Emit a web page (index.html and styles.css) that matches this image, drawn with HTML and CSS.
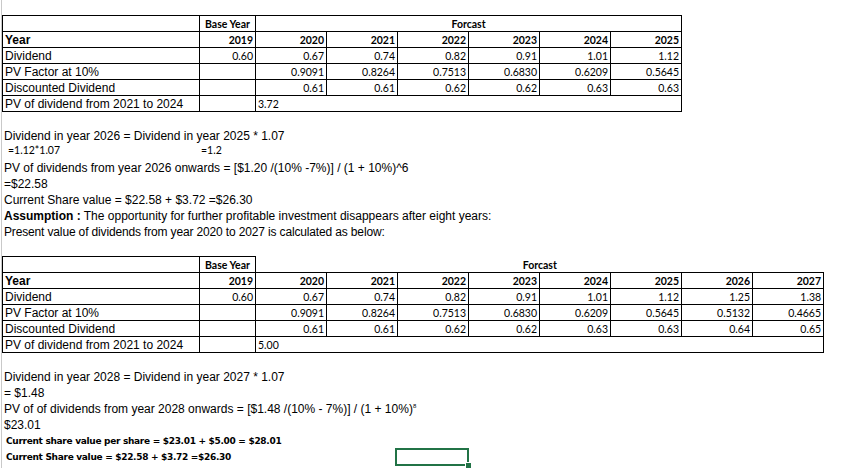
FILE: index.html
```html
<!DOCTYPE html>
<html>
<head>
<meta charset="utf-8">
<title>Dividend valuation</title>
<link rel="stylesheet" href="styles.css">
</head>
<body>
<div class="sheet">
  <div class="row row-first"></div>
  <table class="grid t1">
    <colgroup><col class="c-label"><col class="c-base"><col class="c-yr" span="6"></colgroup>
    <tr><td></td><td class="hdr center">Base Year</td><td class="hdr center" colspan="6">Forcast</td></tr>
    <tr><td class="lbl strong">Year</td><td class="num hdr">2019</td><td class="num hdr">2020</td><td class="num hdr">2021</td><td class="num hdr">2022</td><td class="num hdr">2023</td><td class="num hdr">2024</td><td class="num hdr">2025</td></tr>
    <tr><td class="lbl">Dividend</td><td class="num">0.60</td><td class="num">0.67</td><td class="num">0.74</td><td class="num">0.82</td><td class="num">0.91</td><td class="num">1.01</td><td class="num">1.12</td></tr>
    <tr><td class="lbl">PV Factor at 10%</td><td></td><td class="num">0.9091</td><td class="num">0.8264</td><td class="num">0.7513</td><td class="num">0.6830</td><td class="num">0.6209</td><td class="num">0.5645</td></tr>
    <tr><td class="lbl">Discounted Dividend</td><td></td><td class="num">0.61</td><td class="num">0.61</td><td class="num">0.62</td><td class="num">0.62</td><td class="num">0.63</td><td class="num">0.63</td></tr>
    <tr><td class="lbl">PV of dividend from 2021 to 2024</td><td></td><td class="val" colspan="6">3.72</td></tr>
  </table>
  <div class="row"></div>
  <div class="row line">Dividend in year 2026 = Dividend in year 2025 * 1.07</div>
  <div class="row split"><span class="cell-a small">=1.12*1.07</span><span class="cell-b small">=1.2</span></div>
  <div class="row line">PV of dividends from year 2026 onwards = [$1.20 /(10% -7%)] / (1 + 10%)^6</div>
  <div class="row line">=$22.58</div>
  <div class="row line">Current Share value = $22.58 + $3.72 =$26.30</div>
  <div class="row line"><b>Assumption :</b> The opportunity for further profitable investment disappears after eight years:</div>
  <div class="row line tight">Present value of dividends from year 2020 to 2027 is calculated as below:</div>
  <div class="row"></div>
  <table class="grid t2">
    <colgroup><col class="c-label"><col class="c-base"><col class="c-yr" span="8"></colgroup>
    <tr><td></td><td class="hdr center">Base Year</td><td class="hdr center open" colspan="8">Forcast</td></tr>
    <tr><td class="lbl strong">Year</td><td class="num hdr">2019</td><td class="num hdr">2020</td><td class="num hdr">2021</td><td class="num hdr">2022</td><td class="num hdr">2023</td><td class="num hdr">2024</td><td class="num hdr">2025</td><td class="num hdr">2026</td><td class="num hdr">2027</td></tr>
    <tr><td class="lbl">Dividend</td><td class="num">0.60</td><td class="num">0.67</td><td class="num">0.74</td><td class="num">0.82</td><td class="num">0.91</td><td class="num">1.01</td><td class="num">1.12</td><td class="num">1.25</td><td class="num">1.38</td></tr>
    <tr><td class="lbl">PV Factor at 10%</td><td></td><td class="num">0.9091</td><td class="num">0.8264</td><td class="num">0.7513</td><td class="num">0.6830</td><td class="num">0.6209</td><td class="num">0.5645</td><td class="num">0.5132</td><td class="num">0.4665</td></tr>
    <tr><td class="lbl">Discounted Dividend</td><td></td><td class="num">0.61</td><td class="num">0.61</td><td class="num">0.62</td><td class="num">0.62</td><td class="num">0.63</td><td class="num">0.63</td><td class="num">0.64</td><td class="num">0.65</td></tr>
    <tr><td class="lbl">PV of dividend from 2021 to 2024</td><td></td><td class="val" colspan="8">5.00</td></tr>
  </table>
  <div class="row"></div>
  <div class="row line">Dividend in year 2028 = Dividend in year 2027 * 1.07</div>
  <div class="row line">= $1.48</div>
  <div class="row line">PV of of dividends from year 2028 onwards = [$1.48 /(10% - 7%)] / (1 + 10%)<sup class="tiny">8</sup></div>
  <div class="row line">$23.01</div>
  <div class="row boldline">Current share value per share = $23.01 + $5.00 = $28.01</div>
  <div class="row boldline active">Current Share value = $22.58 + $3.72 =$26.30<span class="sel"></span></div>
</div>
</body>
</html>
```

FILE: styles.css
```css
html, body {
  margin: 0;
  padding: 0;
  background: #ffffff;
}

.sheet {
  position: relative;
  width: 840px;
  height: 468px;
  margin-left: 1px;
  border-left: 1px solid #c9c9c9;
  overflow: hidden;
  color: #000;
}

.row {
  height: 16px;
  box-sizing: border-box;
}

.row-first {
  height: 15px;
}

.line {
  font: 12px "Liberation Sans", Arial, sans-serif;
  line-height: 17px;
  padding-left: 2px;
  white-space: nowrap;
}

.tight {
  letter-spacing: -0.15px;
}

.split {
  display: flex;
  line-height: 17px;
}

.cell-a {
  width: 191px;
  padding-left: 6px;
}

.cell-b {
  padding-left: 2px;
}

.small {
  font: 10.5px Lato, "Liberation Sans", sans-serif;
}

.boldline {
  font: bold 9px "DejaVu Sans", Verdana, sans-serif;
  letter-spacing: -0.3px;
  line-height: 17px;
  padding-left: 4px;
  white-space: nowrap;
}

.active {
  position: relative;
}

.active::before {
  content: "";
  position: absolute;
  left: -2px;
  top: 0;
  width: 2px;
  height: 16px;
  background: #217346;
}

.sel {
  position: absolute;
  left: 393px;
  top: -1px;
  width: 70px;
  height: 14px;
  border: 2px solid #217346;
}

.sel::after {
  content: "";
  position: absolute;
  right: -5px;
  bottom: -5px;
  width: 5px;
  height: 5px;
  background: #217346;
  border: 1px solid #fff;
}

.tiny {
  font-size: 6px;
  vertical-align: top;
  line-height: 10px;
}

.grid {
  border-collapse: collapse;
  table-layout: fixed;
}

.t1 {
  width: 679px;
}

.t2 {
  width: 821px;
}

.c-label { width: 197px; }
.c-base { width: 56px; }
.c-yr { width: 71px; }

.grid tr {
  height: 16px;
}

.grid td {
  border: 1px solid #000;
  height: 16px;
  padding: 0 2px;
  box-sizing: border-box;
  font: 10.5px Lato, "Liberation Sans", sans-serif;
  line-height: 14px;
  vertical-align: bottom;
  white-space: nowrap;
  overflow: hidden;
}

.grid td.lbl {
  font: 12px "Liberation Sans", Arial, sans-serif;
  line-height: 14px;
}

.grid td.strong {
  font-weight: bold;
}

.grid td.hdr {
  font-weight: bold;
}

.grid td.center {
  text-align: center;
}

.grid td.num {
  text-align: right;
}

.grid td.val {
  text-align: left;
}

.grid td.open {
  border-top: none;
  border-right: none;
}
```
